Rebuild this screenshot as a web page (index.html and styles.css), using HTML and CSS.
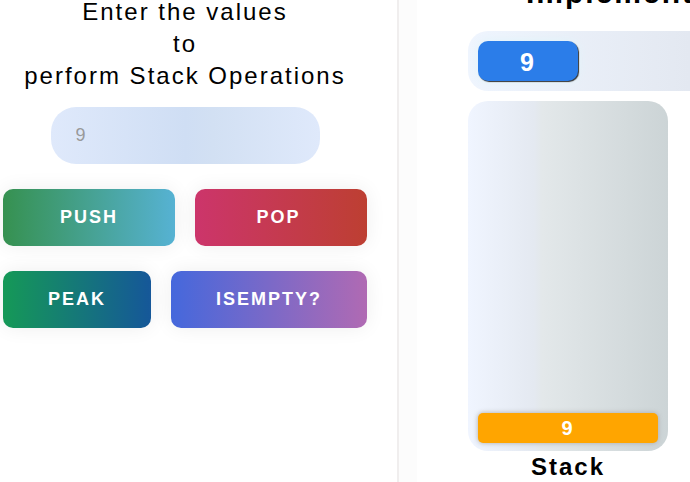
FILE: index.html
```html
<!DOCTYPE html>
<html lang="en">
<head>
<meta charset="utf-8">
<meta name="viewport" content="width=device-width, initial-scale=1">
<title>Stack</title>
<link rel="stylesheet" href="styles.css">
</head>
<body>
<main class="app">
  <section class="controls">
    <label class="prompt" for="value">Enter the values<br>to<br>perform Stack Operations</label>
    <input class="value" id="value" type="text" placeholder="9">
    <div class="actions">
      <div class="row">
        <button class="btn push" type="button">PUSH</button>
        <button class="btn pop" type="button">POP</button>
      </div>
      <div class="row row-wide">
        <button class="btn peak" type="button">PEAK</button>
        <button class="btn empty" type="button">ISEMPTY?</button>
      </div>
    </div>
  </section>
  <section class="view">
    <h1 class="heading">Implementation</h1>
    <div class="track"><div class="chip">9</div></div>
    <div class="stack-column">
      <div class="stack"><div class="item">9</div></div>
      <h2 class="caption">Stack</h2>
    </div>
  </section>
</main>
</body>
</html>
```
FILE: styles.css
```css
* {
  box-sizing: border-box;
}

body {
  margin: 0;
  background: #fcfcfc;
  color: #000;
  font-family: "Liberation Sans", Arial, sans-serif;
  letter-spacing: 2px;
  overflow: hidden;
}

.app {
  display: grid;
  grid-template-columns: 399px minmax(0, 1fr);
  column-gap: 18px;
  min-height: 100vh;
}

.controls {
  display: flex;
  flex-direction: column;
  align-items: center;
  padding: 0 30px 0 3px;
  border-right: 2px solid #f0eeee;
  background: #fff;
}

.prompt {
  margin-top: -4px;
  font-size: 24px;
  line-height: 32px;
  text-align: center;
}

.value {
  width: 269px;
  height: 57px;
  margin-top: 15px;
  padding: 0 25px;
  border: 0;
  border-radius: 25px;
  background: linear-gradient(90deg, #dfe9fb, #cfdef4 50%, #d2e0f3 60%, #dfe9fb);
  font: 18px "Liberation Sans", Arial, sans-serif;
}

.value::placeholder {
  color: #999;
  opacity: 1;
}

.actions {
  display: grid;
  gap: 25px;
  width: 100%;
  margin-top: 25px;
}

.row {
  display: grid;
  grid-template-columns: 1fr 1fr;
  gap: 20px;
}

.row-wide {
  grid-template-columns: 148px 1fr;
}

.btn {
  height: 57px;
  padding: 0 45px;
  border: 0;
  border-radius: 10px;
  box-shadow: 0 0 20px #eee;
  color: #fff;
  font: bold 18px "Liberation Sans", Arial, sans-serif;
  letter-spacing: 2px;
}

.push {
  background: linear-gradient(90deg, #369150, #56b2d3);
}

.pop {
  padding-right: 50px;
  background: linear-gradient(90deg, #cc356b, #bd3f32);
}

.peak {
  background: linear-gradient(90deg, #159957, #155799);
}

.empty {
  background: linear-gradient(90deg, #4568dc, #b06ab3);
}

.view {
  min-width: 0;
  overflow: hidden;
  padding-left: 51px;
  background: #fff;
}

.heading {
  margin: -23px 0 0 58px;
  font-size: 30px;
  line-height: 32px;
  white-space: nowrap;
}

.track {
  height: 60px;
  margin-top: 22px;
  padding: 10px;
  border-radius: 20px 0 0 20px;
  background: linear-gradient(90deg, #eff5fe, #e3e8f1);
}

.chip {
  width: 100px;
  height: 40px;
  border-radius: 10px;
  box-shadow: 1px 1px 1px #333, 0 0 10px #e0f4fa;
  background: #2b7de9;
  color: #fff;
  font-size: 25px;
  font-weight: bold;
  line-height: 42px;
  text-align: center;
}

.stack-column {
  width: 200px;
  margin-top: 10px;
}

.stack {
  display: flex;
  flex-direction: column;
  justify-content: flex-end;
  height: 350px;
  padding: 8px 10px;
  border-radius: 20px;
  background: linear-gradient(90deg, #f0f5ff, #e4e9f1 33%, #e3e8ea 37%, #ccd4d6);
}

.item {
  border-radius: 5px;
  box-shadow: 0 0 5px #aaa;
  background: #ffa500;
  color: #fff;
  font-size: 20px;
  font-weight: bold;
  line-height: 30px;
  text-align: center;
}

.caption {
  margin: 0;
  font-size: 24px;
  line-height: 32px;
  text-align: center;
}
```
